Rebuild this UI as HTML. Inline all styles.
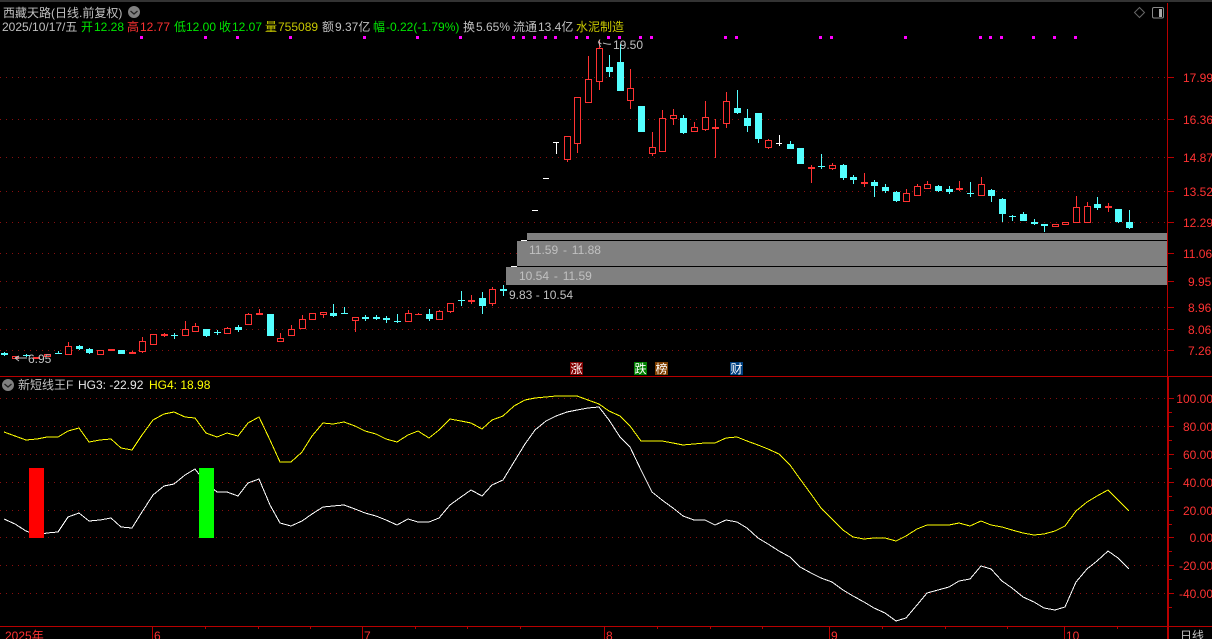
<!DOCTYPE html>
<html><head><meta charset="utf-8"><style>
html,body{margin:0;padding:0;background:#000;width:1212px;height:639px;overflow:hidden}
svg{display:block}
text{font-family:"Liberation Sans","Noto Sans CJK SC",sans-serif;font-size:12px;fill:#c0c0c0}
.r{fill:#ff3232}.g{fill:#00e600}.y{fill:#c8c800}.w{fill:#e8e8e8}.yy{fill:#ffff00}.c{fill:#fff}
.s{shape-rendering:crispEdges}
.b{word-spacing:1.5px}
</style></head><body>
<svg width="1212" height="639" viewBox="0 0 1212 639" xmlns="http://www.w3.org/2000/svg">
<rect width="1212" height="639" fill="#000"/>
<rect width="1212" height="2" fill="#333"/>
<!-- grid -->
<g class="s" stroke="#8a0f0f" stroke-dasharray="1 5" fill="none">
<path d="M0 77.5H1167M0 119.5H1167M0 157.5H1167M0 191.5H1167M0 222.5H1167M0 253.5H1167M0 281.5H1167M0 307.5H1167M0 329.5H1167M0 350.5H1167M0 398.5H1167M0 426.5H1167M0 454.5H1167M0 482.5H1167M0 510.5H1167M0 537.5H1167M0 565.5H1167M0 593.5H1167"/>
</g>
<!-- grey bands -->
<g class="s" fill="#808080">
<rect x="527" y="233" width="640" height="7"/>
<rect x="517" y="241" width="650" height="25"/>
<rect x="506" y="267" width="661" height="18"/>
</g>
<!-- candle wicks -->
<path class="s" fill="none" stroke="#ff3232" d="M68.5 342V346M142.5 337V353M185.5 321V329M195.5 323V326M227.5 327V328M248.5 313V314M280.5 333V338M291.5 325V329M302.5 315V319M323.5 315V318M355.5 321V332M408.5 310V313M439.5 310V311M450.5 312V313M492.5 287V289M492.5 304V306M567.5 160V162M577.5 144V153M588.5 56V79M599.5 40V48M599.5 82V90M630.5 69V88M630.5 101V109M652.5 132V147M652.5 154V156M662.5 110V118M673.5 109V115M673.5 119V125M694.5 122V127M705.5 101V117M705.5 130V131M726.5 92V101M726.5 124V128M768.5 139V140M768.5 148V149M832.5 163V165M832.5 169V170M906.5 189V193M917.5 184V186M917.5 195V196M927.5 181V184M981.5 177V184M1076.5 196V207M1087.5 202V206M132.5 351V353M164.5 333V337M259.5 309V315M471.5 295V304M715.5 119V158M811.5 165V183M864.5 173V187M959.5 181V191M1108.5 203V212M418.5 313V315"/>
<path class="s" fill="none" stroke="#54ffff" d="M89.5 348V354M333.5 304V317M429.5 309V321M482.5 292V314M609.5 55V77M620.5 44V62M683.5 115V134M737.5 90V114M747.5 109V132M758.5 139V143M790.5 141V144M843.5 164V180M853.5 175V184M874.5 180V197M885.5 184V193M896.5 191V202M938.5 185V192M949.5 186V194M991.5 189V202M1002.5 198V222M1023.5 212V214M1097.5 197V210M1118.5 222V223M1129.5 210V229M206.5 336V337M4.5 352V356M26.5 354V357M58.5 351V354M79.5 345V350M174.5 333V339M217.5 330V335M238.5 325V332M344.5 307V314M365.5 315V321M376.5 315V320M386.5 316V323M397.5 314V323M461.5 291V306M503.5 285V296M821.5 154V169M970.5 182V197M1012.5 215V221M1034.5 219V225M1044.5 224V232"/>
<!-- hollow red -->
<path class="s" fill="#000" stroke="#ff3232" d="M12.5 356.5h6v2h-6zM44.5 354.5h6v2h-6zM65.5 346.5h6v8h-6zM97.5 350.5h6v4h-6zM139.5 341.5h6v10h-6zM150.5 334.5h6v10h-6zM182.5 329.5h6v6h-6zM192.5 326.5h6v5h-6zM224.5 328.5h6v5h-6zM245.5 314.5h6v10h-6zM277.5 338.5h6v3h-6zM288.5 329.5h6v6h-6zM299.5 319.5h6v9h-6zM309.5 313.5h6v6h-6zM320.5 312.5h6v2h-6zM352.5 317.5h6v3h-6zM405.5 313.5h6v8h-6zM436.5 311.5h6v8h-6zM447.5 303.5h6v8h-6zM489.5 289.5h6v14h-6zM564.5 136.5h6v23h-6zM574.5 97.5h6v46h-6zM585.5 79.5h6v23h-6zM596.5 48.5h6v33h-6zM627.5 88.5h6v12h-6zM649.5 147.5h6v6h-6zM659.5 118.5h6v33h-6zM670.5 115.5h6v3h-6zM691.5 127.5h6v4h-6zM702.5 117.5h6v12h-6zM723.5 101.5h6v22h-6zM765.5 140.5h6v7h-6zM829.5 165.5h6v3h-6zM903.5 193.5h6v8h-6zM914.5 186.5h6v9h-6zM924.5 184.5h6v4h-6zM978.5 184.5h6v11h-6zM1052.5 224.5h6v2h-6zM1062.5 222.5h6v2h-6zM1073.5 207.5h6v15h-6zM1084.5 206.5h6v16h-6z"/>
<!-- red doji -->
<path class="s" fill="#ff3232" d="M33 357h7v2h-7zM108 349h7v2h-7zM129 352h7v2h-7zM161 334h7v2h-7zM256 313h7v2h-7zM415 314h7v1h-7zM468 300h7v2h-7zM712 127h7v2h-7zM808 167h7v2h-7zM861 182h7v2h-7zM956 188h7v2h-7zM1105 206h7v2h-7z"/>
<!-- cyan filled -->
<path class="s" fill="#54ffff" d="M86 349h7v4h-7zM118 350h7v4h-7zM203 329h7v7h-7zM267 314h7v22h-7zM330 313h7v3h-7zM426 314h7v5h-7zM479 298h7v8h-7zM606 67h7v5h-7zM617 62h7v29h-7zM638 106h7v26h-7zM680 118h7v15h-7zM734 108h7v5h-7zM744 118h7v8h-7zM755 113h7v26h-7zM787 144h7v5h-7zM797 148h7v16h-7zM840 165h7v13h-7zM850 177h7v3h-7zM871 182h7v4h-7zM882 187h7v4h-7zM893 192h7v9h-7zM935 186h7v5h-7zM946 189h7v3h-7zM988 190h7v6h-7zM999 199h7v15h-7zM1020 214h7v7h-7zM1094 204h7v4h-7zM1115 209h7v13h-7zM1126 222h7v6h-7z"/>
<!-- cyan cross -->
<path class="s" fill="#54ffff" d="M1 353h7v2h-7zM23 355h7v1h-7zM55 353h7v1h-7zM76 346h7v3h-7zM171 335h7v1h-7zM214 332h7v1h-7zM235 327h7v3h-7zM341 313h7v1h-7zM362 317h7v2h-7zM373 317h7v2h-7zM383 318h7v2h-7zM394 321h7v1h-7zM458 300h7v1h-7zM500 289h7v2h-7zM818 166h7v1h-7zM967 193h7v1h-7zM1009 216h7v1h-7zM1031 222h7v2h-7zM1041 224h7v2h-7z"/>
<!-- white -->
<path class="s" fill="#fff" d="M511 266h6v1h-6zM521 240h6v1h-6zM532 210h6v1h-6zM543 178h6v1h-6zM553 142h6v1h-6zM556 142h1v12h-1zM776 143h6v1h-6zM779 135h1v11h-1z"/>
<!-- magenta dots -->
<path class="s" fill="#ff00ff" d="M140 36h3v3h-3zM204 36h3v3h-3zM236 36h3v3h-3zM289 36h3v3h-3zM363 36h3v3h-3zM416 36h3v3h-3zM459 36h3v3h-3zM512 36h3v3h-3zM522 36h3v3h-3zM533 36h3v3h-3zM544 36h3v3h-3zM554 36h3v3h-3zM575 36h3v3h-3zM586 36h3v3h-3zM607 36h3v3h-3zM618 36h3v3h-3zM639 36h3v3h-3zM650 36h3v3h-3zM724 36h3v3h-3zM735 36h3v3h-3zM819 36h3v3h-3zM830 36h3v3h-3zM904 36h3v3h-3zM979 36h3v3h-3zM989 36h3v3h-3zM1000 36h3v3h-3zM1032 36h3v3h-3zM1053 36h3v3h-3zM1074 36h3v3h-3z"/>
<!-- indicator lines -->
<polyline class="s" fill="none" stroke="#ffff00" points="4,432 15,436 26,440 37,439 47,437 58,437 68,431 79,428 89,442 100,440 111,439 121,448 132,450 142,435 153,420 164,414 174,412 185,417 195,418 206,433 217,437 227,433 238,436 248,423 259,417 270,440 280,462 291,462 302,452 312,436 323,423 333,424 344,422 355,426 365,431 376,434 386,439 397,442 408,435 418,431 429,438 439,430 450,419 461,421 471,423 482,429 492,420 503,416 514,406 525,400 535,398 546,397 556,396 567,396 577,396 588,400 599,404 609,411 620,416 630,426 641,441 652,441 662,441 673,443 683,445 694,444 705,443 715,443 726,438 737,437 747,441 758,445 768,449 779,454 790,465 800,479 811,494 821,508 832,519 843,530 853,537 864,539 874,538 885,538 896,541 906,536 917,529 927,525 938,525 949,525 959,523 970,526 981,521 991,525 1002,527 1012,530 1023,533 1034,535 1044,534 1055,531 1065,526 1076,511 1087,502 1097,496 1108,490 1118,500 1129,511"/>
<polyline class="s" fill="none" stroke="#ffffff" points="4,519 15,524 26,531 37,535 47,533 58,532 68,517 79,513 89,521 100,520 111,518 121,527 132,528 142,512 153,495 164,486 174,484 185,475 195,469 206,483 217,492 227,492 238,496 248,483 259,479 270,505 280,523 291,526 302,521 312,514 323,507 333,506 344,505 355,509 365,513 376,516 386,520 397,525 408,519 418,522 429,522 439,518 450,505 461,497 471,490 482,496 492,485 503,480 514,462 525,444 535,430 546,421 556,416 567,412 577,410 588,408 599,407 609,420 620,437 630,447 641,470 652,492 662,500 673,508 683,516 694,520 705,520 715,525 726,520 737,522 747,528 758,538 768,544 779,551 790,557 800,567 811,573 821,578 832,582 843,590 853,596 864,602 874,608 885,613 896,621 906,618 917,605 927,593 938,590 949,587 959,581 970,579 981,566 991,569 1002,581 1012,588 1023,597 1034,602 1044,608 1055,610 1065,607 1076,582 1087,569 1097,561 1108,551 1118,558 1129,569"/>
<!-- signal boxes -->
<rect x="29" y="468" width="15" height="70" fill="#ff0000"/>
<rect x="199" y="468" width="15" height="70" fill="#00ff00"/>
<!-- frame -->
<g class="s" fill="#b80000">
<rect x="1167" y="3" width="1" height="373"/>
<rect x="1167" y="377" width="2" height="262"/>
<rect x="0" y="376" width="1212" height="1"/>
<rect x="0" y="626" width="1212" height="1"/>
<path d="M1168 77h6v1h-6zM1168 119h6v1h-6zM1168 157h6v1h-6zM1168 191h6v1h-6zM1168 222h6v1h-6zM1168 253h6v1h-6zM1168 281h6v1h-6zM1168 307h6v1h-6zM1168 329h6v1h-6zM1168 350h6v1h-6z"/>
<path d="M1169 398h5v1h-5zM1169 426h5v1h-5zM1169 454h5v1h-5zM1169 482h5v1h-5zM1169 510h5v1h-5zM1169 537h5v1h-5zM1169 565h5v1h-5zM1169 593h5v1h-5zM1169 412h3v1h-3zM1169 440h3v1h-3zM1169 468h3v1h-3zM1169 496h3v1h-3zM1169 524h3v1h-3zM1169 551h3v1h-3zM1169 579h3v1h-3zM1169 607h3v1h-3z"/>
<path d="M152 627h1v12h-1zM362 627h1v12h-1zM604 627h1v12h-1zM829 627h1v12h-1zM1064 627h1v12h-1zM205 627h1v2h-1zM258 627h1v2h-1zM310 627h1v2h-1zM415 627h1v2h-1zM467 627h1v2h-1zM520 627h1v2h-1zM657 627h1v2h-1zM710 627h1v2h-1zM762 627h1v2h-1zM882 627h1v2h-1zM945 627h1v2h-1zM1007 627h1v2h-1zM1117 627h1v2h-1z"/>
</g>
<!-- header text -->
<text x="3" y="17">西藏天路(日线.前复权)</text>
<circle cx="134" cy="12" r="6" fill="#808080"/>
<path d="M130.5 11l3.5 3 3.5-3" fill="none" stroke="#222" stroke-width="1.3"/>
<text x="2" y="31">2025/10/17/五</text>
<text x="81" y="31" class="g">开</text><text x="94" y="31" class="g">12.28</text>
<text x="127" y="31" class="r">高</text><text x="140" y="31" class="r">12.77</text>
<text x="174" y="31" class="g">低</text><text x="186" y="31" class="g">12.00</text>
<text x="219" y="31" class="g">收</text><text x="232" y="31" class="g">12.07</text>
<text x="265" y="31" class="y">量</text><text x="278" y="31" class="y">755089</text>
<text x="322" y="31">额</text><text x="335" y="31">9.37亿</text>
<text x="373" y="31" class="g">幅</text><text x="386" y="31" class="g">-0.22(-1.79%)</text>
<text x="463" y="31">换</text><text x="476" y="31">5.65%</text>
<text x="513" y="31">流通</text><text x="538" y="31">13.4亿</text>
<text x="576" y="31" class="y">水泥制造</text>
<!-- top right icons -->
<path d="M1139.5 7.5l5 5-5 5-5-5z" fill="none" stroke="#666"/>
<rect x="1152.5" y="7.5" width="11" height="10.5" rx="1.5" fill="#000" stroke="#888"/>
<rect x="1159" y="9" width="3" height="8" fill="#aaa"/>
<!-- price labels -->
<text class="r" x="1183" y="82">17.99</text>
<text class="r" x="1183" y="124">16.36</text>
<text class="r" x="1183" y="162">14.87</text>
<text class="r" x="1183" y="196">13.52</text>
<text class="r" x="1183" y="227">12.29</text>
<text class="r" x="1183" y="258">11.06</text>
<text class="r" x="1188" y="286">9.95</text>
<text class="r" x="1188" y="312">8.96</text>
<text class="r" x="1188" y="334">8.06</text>
<text class="r" x="1188" y="355">7.26</text>
<!-- annotations -->
<path d="M600 39.5l-1.5 2.5 3 2M598.5 42l2 5M603 43c2.500 .5 5 2 8 1" fill="none" stroke="#c0c0c0"/>
<text x="613" y="49">19.50</text>
<path d="M15 358l4-2M15 358l4 3M15 358h12" fill="none" stroke="#c0c0c0"/>
<text x="28" y="363">6.95</text>
<text class="b" x="529" y="254">11.59 - 11.88</text>
<text class="b" x="519" y="280">10.54 - 11.59</text>
<text x="509" y="299">9.83 - 10.54</text>
<!-- badges -->
<rect x="570" y="362" width="13" height="13" fill="#800000"/><text class="c" x="570.5" y="373">涨</text>
<rect x="634" y="362" width="13" height="13" fill="#008000"/><text class="c" x="634.5" y="373">跌</text>
<rect x="655" y="362" width="13" height="13" fill="#804000"/><text class="c" x="655.5" y="373">榜</text>
<rect x="730" y="362" width="13" height="13" fill="#004080"/><text class="c" x="730.5" y="373">财</text>
<!-- indicator title -->
<circle cx="8" cy="385" r="6" fill="#808080"/>
<path d="M4.500 384l3.500 3 3.500-3" fill="none" stroke="#222" stroke-width="1.3"/>
<text x="18" y="389">新短线王F</text>
<text class="w" x="78" y="389">HG3: -22.92</text>
<text class="yy" x="149" y="389">HG4: 18.98</text>
<!-- indicator labels -->
<g text-anchor="end">
<text class="r" x="1213" y="403">100.00</text>
<text class="r" x="1213" y="431">80.00</text>
<text class="r" x="1213" y="459">60.00</text>
<text class="r" x="1213" y="487">40.00</text>
<text class="r" x="1213" y="515">20.00</text>
<text class="r" x="1213" y="542">0.00</text>
<text class="r" x="1213" y="570">-20.00</text>
<text class="r" x="1213" y="598">-40.00</text>
</g>
<!-- date axis -->
<text class="r" x="5" y="640">2025年</text>
<text class="r" x="154" y="640">6</text>
<text class="r" x="364" y="640">7</text>
<text class="r" x="606" y="640">8</text>
<text class="r" x="831" y="640">9</text>
<text class="r" x="1066" y="640">10</text>
<text x="1180" y="640">日线</text>
</svg>
</body></html>
